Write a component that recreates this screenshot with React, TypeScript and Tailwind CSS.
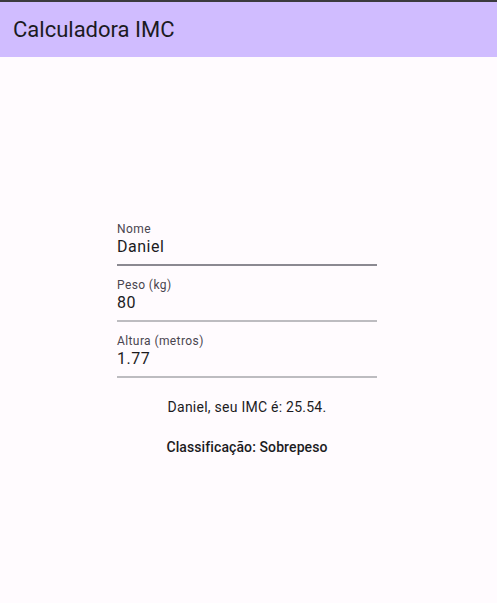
export default function App() {
  const fields = [
    { label: "Nome", value: "Daniel", line: "border-[#8b8991]" },
    { label: "Peso (kg)", value: "80", line: "border-[#bdbcc0]" },
    { label: "Altura (metros)", value: "1.77", line: "border-[#bdbcc0]" },
  ];

  return (
    <main className="h-[603px] flex flex-col bg-[#fffbfe] font-['Roboto',sans-serif] text-[#1c1b1f]">
      {/* AppBar */}
      <header className="h-[57px] shrink-0 border-t-2 border-[#3b3a3e] bg-[#d0bcff] flex items-center px-[13px]">
        <h1 className="text-[22px] leading-7 font-normal">Calculadora IMC</h1>
      </header>

      <div className="flex-1 flex flex-col items-center justify-center pt-[6px] pr-[3px]">
        <div className="w-[260px] flex flex-col">
          {fields.map((f) => (
            <div key={f.label} className={`pt-[13px] pb-[6px] border-b-2 ${f.line}`}>
              <div className="text-[12px] leading-[13px] text-[#49454f] tracking-[0.4px]">
                {f.label}
              </div>
              <div className="text-[16px] leading-[22px] tracking-[0.5px]">{f.value}</div>
            </div>
          ))}
        </div>
        <p className="mt-[19px] text-[14px] leading-5 tracking-[0.25px] text-[#1c1b1f]">
          Daniel, seu IMC é: 25.54.
        </p>
        <p className="mt-[20px] text-[14px] leading-5 font-medium tracking-[0.1px] text-[#1c1b1f]">
          Classificação: Sobrepeso
        </p>
      </div>
    </main>
  );
}
